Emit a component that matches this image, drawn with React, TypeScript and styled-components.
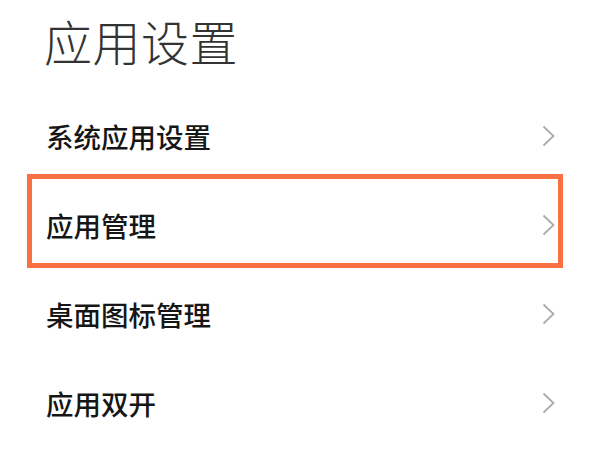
import React from 'react';
import styled, {createGlobalStyle} from 'styled-components';

const items = [
    {title: '系统应用设置', active: false},
    {title: '应用管理', active: true},
    {title: '桌面图标管理', active: false},
    {title: '应用双开', active: false},
];

function Chevron() {
    return (
        <svg width="13" height="22" viewBox="0 0 13 22">
            <polyline points="1.5,1.5 11.5,11 1.5,20.5" fill="none" stroke="#ababab" strokeWidth="1.8"/>
        </svg>
    );
}

function App() {
    return (
        <Page>
            <GlobalStyle/>
            <Header>应用设置</Header>
            <List>
                {items.map((item) => (
                    <Row key={item.title} $active={item.active}>
                        <Label>{item.title}</Label>
                        <Chevron/>
                    </Row>
                ))}
            </List>
        </Page>
    );
}

const GlobalStyle = createGlobalStyle`
    body {
        margin: 0;
        background: #ffffff;
        font-family: "Noto Sans CJK SC", "Noto Sans", sans-serif;
    }
`

const Page = styled.div`
    width: 600px;
    height: 450px;
    background: #ffffff;
    overflow: hidden;
`

const Header = styled.div`
    box-sizing: border-box;
    height: 91px;
    padding: 16px 0 0 44px;
    font-size: 48px;
    line-height: 48px;
    letter-spacing: 0.5px;
    font-weight: 300;
    color: #333333;
`

const List = styled.div`
    display: flex;
    flex-direction: column;
`

const Row = styled.div<{ $active: boolean }>`
    position: relative;
    height: 89px;
    display: flex;
    align-items: center;
    justify-content: space-between;
    padding: 0 45px 0 46px;

    &::after {
        content: '';
        display: ${(p) => (p.$active ? 'block' : 'none')};
        position: absolute;
        left: 27px;
        right: 37px;
        top: -6px;
        bottom: 1px;
        border: 5px solid #f87142;
    }
`

const Label = styled.span`
    font-size: 27.5px;
    line-height: 30px;
    font-weight: 500;
    color: #161616;
`

export default App;
